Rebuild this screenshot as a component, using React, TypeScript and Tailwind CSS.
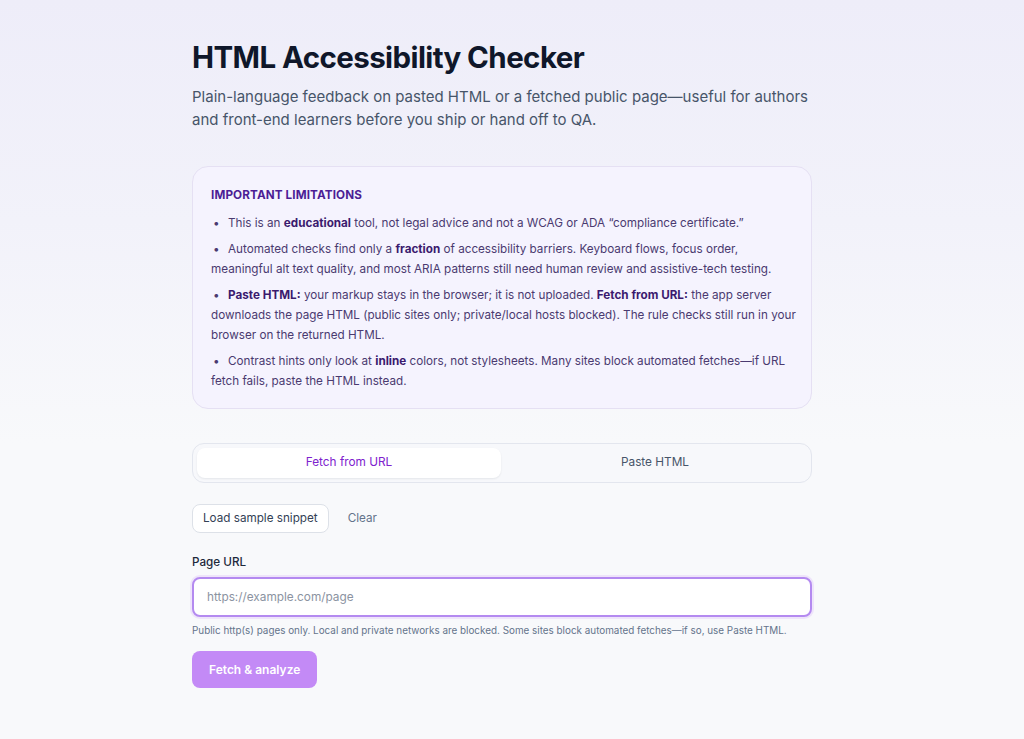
import { useState } from 'react'

const bullet = "before:content-['•'] before:inline-block before:w-[17px] before:pl-[2px]"

export default function App() {
  const [tab, setTab] = useState<'url' | 'paste'>('url')
  return (
    <div
      className="min-h-screen bg-[linear-gradient(180deg,#eeedf9_0%,#f2f2fa_30%,#f8f9fb_60%,#f8f9fb_100%)] text-slate-900"
      style={{ fontFamily: 'Inter, "Noto Sans", sans-serif' }}
    >
      <div className="flex justify-center pr-[20px]">
        <main className="w-[620px] pt-[38px] pb-12">
          <h1 className="text-[29.5px] font-bold leading-[38px] tracking-[-0.02em] text-[#0f172a]">HTML Accessibility Checker</h1>
          <p className="mt-[9px] text-[15px] leading-[23px] text-[#475569]">
            Plain-language feedback on pasted HTML or a fetched public page—useful for authors and front-end learners before you ship or hand off to QA.
          </p>

          <section className="mt-[35px] rounded-2xl border border-[#e5e0f3] bg-[#f5f3fe] pl-[18px] pr-[14px] pt-[18px] pb-[17px] text-[11.7px] leading-[20px] text-[#4a3a70]">
            <h2 className="text-[11.7px] font-bold uppercase tracking-[0.01em] text-[#4c1d95]">Important limitations</h2>
            <ul className="mt-[8px] space-y-[6px]">
              <li className={bullet}>
                This is an <b className="text-[#3b1a6e]">educational</b> tool, not legal advice and not a WCAG or ADA “compliance certificate.”
              </li>
              <li className={bullet}>
                Automated checks find only a <b className="text-[#3b1a6e]">fraction</b> of accessibility barriers. Keyboard flows, focus order, meaningful alt text quality, and most ARIA patterns still need human review and assistive-tech testing.
              </li>
              <li className={bullet}>
                <b className="text-[#3b1a6e]">Paste HTML:</b> your markup stays in the browser; it is not uploaded. <b className="text-[#3b1a6e]">Fetch from URL:</b> the app server downloads the page HTML (public sites only; private/local hosts blocked). The rule checks still run in your browser on the returned HTML.
              </li>
              <li className={bullet}>
                Contrast hints only look at <b className="text-[#3b1a6e]">inline</b> colors, not stylesheets. Many sites block automated fetches—if URL fetch fails, paste the HTML instead.
              </li>
            </ul>
          </section>

          <div className="mt-[34px] grid grid-cols-2 gap-[2px] rounded-xl border border-[#e3e6ee] bg-[#f7f8fb] p-[4px]">
            <button
              onClick={() => setTab('url')}
              className={`h-[30px] rounded-lg text-[11.8px] ${tab === 'url' ? 'bg-white text-[#7e22ce] shadow-[0_1px_2px_rgba(15,23,42,0.08)]' : 'text-[#475569]'}`}
            >
              Fetch from URL
            </button>
            <button
              onClick={() => setTab('paste')}
              className={`h-[30px] rounded-lg text-[11.8px] ${tab === 'paste' ? 'bg-white text-[#7e22ce] shadow-[0_1px_2px_rgba(15,23,42,0.08)]' : 'text-[#475569]'}`}
            >
              Paste HTML
            </button>
          </div>

          <div className="mt-[21px] flex items-center gap-[7px]">
            <button className="h-[29px] rounded-lg border border-[#dde1e8] bg-white px-[10px] text-[11.7px] text-[#334155]">Load sample snippet</button>
            <button className="h-[29px] px-[12px] text-[11.7px] text-[#64748b]">Clear</button>
          </div>

          <label className="mt-[21px] block text-[11.7px] font-medium leading-[16px] text-[#1e293b]" htmlFor="url">Page URL</label>
          <input
            id="url"
            placeholder="https://example.com/page"
            className="mt-[7px] block h-[40px] w-full rounded-lg border-2 border-[#b48af0] bg-white px-[13px] text-[11.8px] text-slate-800 shadow-[0_0_0_2px_rgba(192,132,252,0.18)] outline-none placeholder:text-[#8b93a1]"
          />
          <p className="mt-[6px] text-[9.9px] leading-[14px] text-[#64748b]">
            Public http(s) pages only. Local and private networks are blocked. Some sites block automated fetches—if so, use Paste HTML.
          </p>
          <button className="mt-[14px] h-[37px] rounded-lg bg-[#c38af6] px-[17px] text-[12px] font-semibold text-white">Fetch &amp; analyze</button>
        </main>
      </div>
    </div>
  )
}
